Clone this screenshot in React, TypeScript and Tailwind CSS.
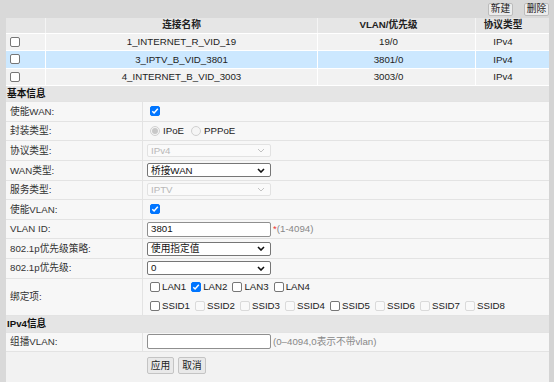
const font = "font-['Liberation_Sans','Noto_Sans_CJK_SC',sans-serif]";

function Box({ checked, disabled }: { checked?: boolean; disabled?: boolean }) {
  const tone = checked
    ? "border-[#0075ff] bg-[#0075ff]"
    : disabled
      ? "border-[#dadada] bg-[#f9f9f9]"
      : "border-[#767676] bg-white";
  return (
    <span className={`inline-flex h-[10px] w-[10px] shrink-0 items-center justify-center rounded-[2px] border ${tone}`}>
      {checked && (
        <svg width="8" height="8" viewBox="0 0 8 8">
          <path d="M1.3 4.2 3.1 6 6.8 1.8" fill="none" stroke="white" strokeWidth="1.5" />
        </svg>
      )}
    </span>
  );
}

function Radio({ checked, label }: { checked?: boolean; label: string }) {
  return (
    <span className="inline-flex items-center gap-[3px]">
      <span className="inline-flex h-[10px] w-[10px] items-center justify-center rounded-full border border-[#d0d0d0] bg-[#f5f5f5]">
        {checked && <span className="h-[6px] w-[6px] rounded-full bg-[#c8c8c8]" />}
      </span>
      <span className="text-[#222]">{label}</span>
    </span>
  );
}

function Chevron({ dark }: { dark?: boolean }) {
  return (
    <svg width="8" height="5" viewBox="0 0 8 5">
      <path
        d="M1 1l3 3 3-3"
        fill="none"
        stroke={dark ? "#111" : "#c2c2c2"}
        strokeWidth={dark ? 1.6 : 1}
      />
    </svg>
  );
}

function Select({ value, disabled }: { value: string; disabled?: boolean }) {
  return (
    <div
      className={`flex w-[124px] items-center justify-between rounded-[2px] border pl-[3px] pr-[5px] ${
        disabled
          ? "h-[13px] border-[#e2e2e2] bg-[#fafafa] text-[#b8b8b8]"
          : "h-[14px] border-[#767676] bg-white text-[#111]"
      }`}
    >
      <span>{value}</span>
      <Chevron dark={!disabled} />
    </div>
  );
}

function Input({ value }: { value?: string }) {
  return (
    <div className="flex h-[15px] w-[124px] items-center rounded-[2px] border border-[#8f8f8f] bg-white pl-[3px] text-[#111]">
      {value}
    </div>
  );
}

function Row({ label, children, tall }: { label: string; children: React.ReactNode; tall?: boolean }) {
  return (
    <div className={`flex border-b border-[#e3e3e3] ${tall ? "h-[37.3px]" : "h-[19.6px]"}`}>
      <div className="flex w-[137px] items-center border-r border-[#e3e3e3] pl-[4px] text-[#333]">{label}</div>
      <div className="flex flex-1 items-center pl-[4px]">{children}</div>
    </div>
  );
}

function Check({ label, checked, disabled }: { label: string; checked?: boolean; disabled?: boolean }) {
  return (
    <span className="inline-flex items-center gap-[2px]">
      <Box checked={checked} disabled={disabled} />
      <span className="text-[#222]">{label}</span>
    </span>
  );
}

const rows = [
  { name: "1_INTERNET_R_VID_19", vlan: "19/0", proto: "IPv4" },
  { name: "3_IPTV_B_VID_3801", vlan: "3801/0", proto: "IPv4", active: true },
  { name: "4_INTERNET_B_VID_3003", vlan: "3003/0", proto: "IPv4" },
];

export default function App() {
  return (
    <div className={`flex h-[382px] w-[554px] overflow-hidden bg-[#d9d9d9] text-[9.7px] leading-none ${font}`}>
      <div className="w-[6px] shrink-0" />
      <div className="flex w-[543px] flex-col">
        {/* toolbar */}
        <div className="flex h-[18px] items-center justify-end gap-[11px]">
          <button type="button" className="h-[13px] w-[25px] rounded-[2px] border border-[#bcbcbc] bg-[#ececec] text-[#222]">
            新建
          </button>
          <button type="button" className="h-[13px] w-[25px] rounded-[2px] border border-[#bcbcbc] bg-[#ececec] text-[#222]">
            删除
          </button>
        </div>

        {/* connection list */}
        <div className="flex h-[15.5px] border-b border-white bg-[#e6e6e6] font-bold text-[#222]">
          <div className="w-[40px] border-r border-[#f4f4f4]" />
          <div className="flex w-[272px] items-center justify-center border-r border-[#f4f4f4]">连接名称</div>
          <div className="flex w-[158px] items-center justify-center border-r border-[#f4f4f4] pr-[16px]">VLAN/优先级</div>
          <div className="flex w-[73px] items-center justify-center pr-[19px]">协议类型</div>
        </div>
        {rows.map((r) => (
          <div
            key={r.name}
            className={`flex h-[17.6px] border-b border-white text-[#222] ${r.active ? "bg-[#cce8ff]" : "bg-[#f2f2f2]"}`}
          >
            <div className="flex w-[40px] items-center border-r border-white pl-[4px]">
              <Box />
            </div>
            <div className="flex w-[272px] items-center justify-center border-r border-white">{r.name}</div>
            <div className="flex w-[158px] items-center justify-center border-r border-white pr-[16px]">{r.vlan}</div>
            <div className="flex w-[73px] items-center justify-center pr-[19px]">{r.proto}</div>
          </div>
        ))}

        {/* form */}
        <div className="flex flex-1 flex-col bg-[#f7f7f7]">
          <div className="flex h-[16px] items-center border-b border-[#e3e3e3] bg-[#e5e5e5] pl-[1px] font-bold text-[#111]">
            基本信息
          </div>
          <Row label="使能WAN:">
            <span className="pl-[3px]">
              <Box checked />
            </span>
          </Row>
          <Row label="封装类型:">
            <span className="flex gap-[7px] pl-[3px]">
              <Radio checked label="IPoE" />
              <Radio label="PPPoE" />
            </span>
          </Row>
          <Row label="协议类型:">
            <Select value="IPv4" disabled />
          </Row>
          <Row label="WAN类型:">
            <Select value="桥接WAN" />
          </Row>
          <Row label="服务类型:">
            <Select value="IPTV" disabled />
          </Row>
          <Row label="使能VLAN:">
            <span className="pl-[3px]">
              <Box checked />
            </span>
          </Row>
          <Row label="VLAN ID:">
            <Input value="3801" />
            <span className="ml-[2px] text-[#e33]">*</span>
            <span className="text-[#888]">(1-4094)</span>
          </Row>
          <Row label="802.1p优先级策略:">
            <Select value="使用指定值" />
          </Row>
          <Row label="802.1p优先级:">
            <Select value="0" />
          </Row>
          <Row label="绑定项:" tall>
            <div className="flex flex-col gap-[9px] pl-[3px]">
              <div className="flex gap-[5px]">
                <Check label="LAN1" />
                <Check label="LAN2" checked />
                <Check label="LAN3" />
                <Check label="LAN4" />
              </div>
              <div className="flex gap-[5px]">
                <Check label="SSID1" />
                <Check label="SSID2" disabled />
                <Check label="SSID3" disabled />
                <Check label="SSID4" disabled />
                <Check label="SSID5" />
                <Check label="SSID6" disabled />
                <Check label="SSID7" disabled />
                <Check label="SSID8" disabled />
              </div>
            </div>
          </Row>
          <div className="flex h-[16.6px] items-center border-b border-[#e3e3e3] bg-[#e5e5e5] pl-[1px] font-bold text-[#111]">
            IPv4信息
          </div>
          <Row label="组播VLAN:">
            <Input />
            <span className="ml-[2px] text-[#888]">(0–4094,0表示不带vlan)</span>
          </Row>
          <div className="flex flex-1 gap-[4px] bg-[#f2f2f2] pl-[141px] pt-[5px]">
            <button type="button" className="h-[17px] w-[27px] rounded-[2px] border border-[#c4c4c4] bg-[#e9e9e9] text-[#222]">
              应用
            </button>
            <button type="button" className="h-[17px] w-[28px] rounded-[2px] border border-[#c4c4c4] bg-[#e9e9e9] text-[#222]">
              取消
            </button>
          </div>
        </div>
      </div>
      <div className="w-[5px] shrink-0 bg-[#d4d4d4]" />
    </div>
  );
}
